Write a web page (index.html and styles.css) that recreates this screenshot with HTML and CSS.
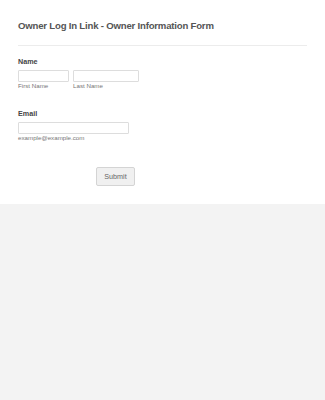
FILE: index.html
```html
<!DOCTYPE html>
<html lang="en">
<head>
<meta charset="UTF-8">
<meta name="viewport" content="width=device-width, initial-scale=1.0">
<title>Owner Log In Link - Owner Information Form</title>
<link rel="stylesheet" href="styles.css">
</head>
<body>
    <div class="form-wrap">
        <form class="form-card">
            <div class="form-header">
                <h2>Owner Log In Link - Owner Information Form</h2>
            </div>
            <div class="field">
                <label class="field-label">Name</label>
                <div class="name-row">
                    <div class="sub first">
                        <input type="text">
                        <span class="sublabel">First Name</span>
                    </div>
                    <div class="sub last">
                        <input type="text">
                        <span class="sublabel">Last Name</span>
                    </div>
                </div>
            </div>
            <div class="field email-field">
                <label class="field-label">Email</label>
                <input type="email" class="email-input">
                <span class="sublabel">example@example.com</span>
            </div>
            <div class="actions">
                <button type="submit">Submit</button>
            </div>
        </form>
    </div>
</body>
</html>
```

FILE: styles.css
```css
body {
    font-family: "Liberation Sans", Arial, sans-serif;
    background-color: #f3f3f3;
    margin: 0;
    padding: 0;
}

.form-wrap {
    background-color: #fff;
    height: 204px;
    box-sizing: border-box;
    padding: 18px 18px 0;
}

.form-header {
    border-bottom: 1px solid #ececec;
    padding-bottom: 12px;
}

.form-header h2 {
    margin: 0;
    font-size: 9.6px;
    letter-spacing: -0.2px;
    font-weight: bold;
    color: #555;
    line-height: 15px;
}

.field {
    margin-top: 11px;
}

.field-label {
    display: block;
    font-size: 7.2px;
    font-weight: bold;
    color: #444;
    line-height: 10px;
    margin-bottom: 3px;
}

.name-row {
    display: flex;
    gap: 4px;
}

.sub {
    display: flex;
    flex-direction: column;
}

.first input {
    width: 51px;
}

.last input {
    width: 66px;
}

input {
    box-sizing: border-box;
    height: 12px;
    border: 1px solid #ddd;
    border-radius: 1px;
    padding: 0;
    margin: 0;
    background: #fff;
}

.email-input {
    display: block;
    width: 111px;
}

.sublabel {
    display: block;
    font-size: 6.2px;
    color: #777;
    line-height: 8px;
}

.email-field {
    margin-top: 19px;
}

.actions {
    display: flex;
    padding-left: 78px;
    margin-top: 25px;
}

.actions button {
    width: 39px;
    height: 19px;
    padding: 0;
    font-family: inherit;
    font-size: 7.2px;
    color: #666;
    background-color: #f0f0f0;
    border: 1px solid #d4d4d4;
    border-radius: 2px;
}
```
